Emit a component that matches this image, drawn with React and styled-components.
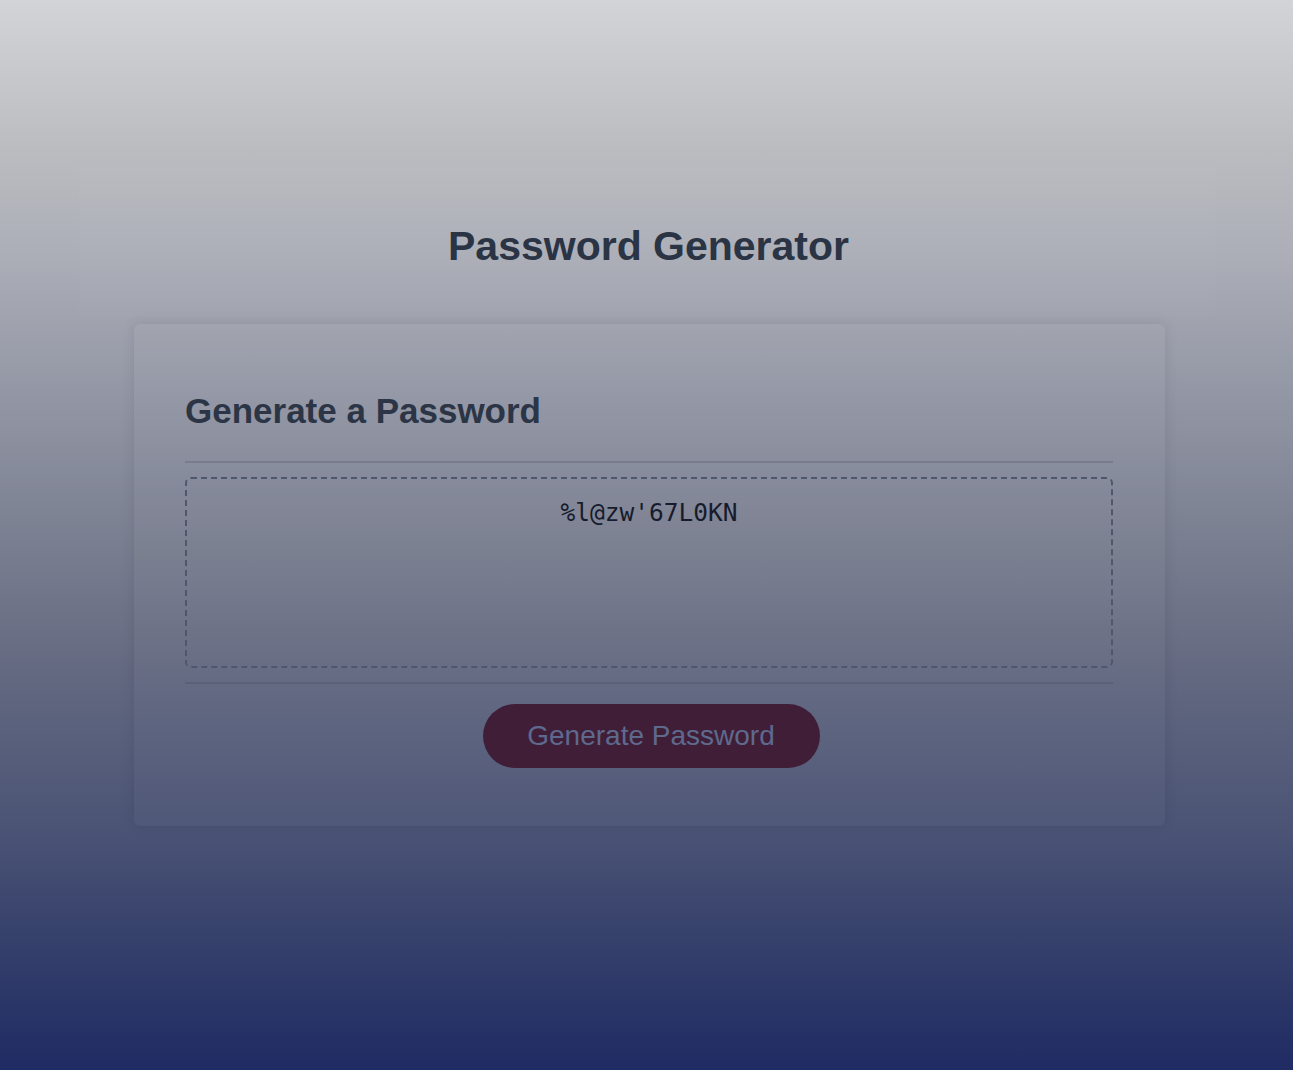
import React from "react";
import styled, { createGlobalStyle } from "styled-components";

const GlobalStyle = createGlobalStyle`
  html, body {
    margin: 0;
    padding: 0;
  }
  body {
    min-height: 1070px;
    font-family: "Liberation Sans", Arial, sans-serif;
    background: linear-gradient(
      to bottom,
      #d3d4d8 0%,
      #bbbcc0 14%,
      #abaeb7 24%,
      #8d91a0 40%,
      #777c8e 52%,
      #61677f 64%,
      #4a5375 78%,
      #35406b 88%,
      #1f2b63 100%
    );
  }
`;

const Page = styled.div`
  display: flex;
  flex-direction: column;
  align-items: center;
  padding-top: 167px;
  min-height: 1070px;
  box-sizing: border-box;
`;

const Header = styled.header`
  width: 1136px;
  height: 150px;
  box-sizing: border-box;
  padding-top: 55px;
  background: rgba(255, 255, 255, 0.015);
  text-align: center;
`;

const Title = styled.h1`
  margin: 0;
  font-size: 41px;
  line-height: 48px;
  font-weight: 700;
  color: #2a3444;
  padding-left: 4px;
`;

const Card = styled.section`
  width: 1031px;
  margin: 7px 0 0 6px;
  box-sizing: border-box;
  padding: 67px 52px 58px 51px;
  border-radius: 6px;
  background: rgba(255, 255, 255, 0.025);
  box-shadow: 0 0 14px rgba(20, 24, 40, 0.1);
  display: flex;
  flex-direction: column;
`;

const CardTitle = styled.h2`
  margin: 0 0 30px;
  font-size: 35px;
  line-height: 40px;
  font-weight: 700;
  color: #2b3546;
`;

const Rule = styled.div`
  height: 2px;
  background: rgba(60, 66, 90, 0.22);
`;

const Output = styled.div`
  margin: 14px 0;
  height: 191px;
  box-sizing: border-box;
  border: 2px dashed #50566d;
  border-radius: 6px;
  padding-top: 19px;
  text-align: center;
  font-family: "DejaVu Sans Mono", "Liberation Mono", monospace;
  font-size: 24.5px;
  line-height: 30px;
  color: #161c2c;
`;

const Footer = styled.div`
  display: flex;
  justify-content: center;
  padding-top: 20px;
`;

const Button = styled.button`
  width: 337px;
  height: 64px;
  margin-left: 4px;
  border: none;
  border-radius: 32px;
  background: #411e38;
  color: #5d6a8e;
  font-family: "Liberation Sans", Arial, sans-serif;
  font-size: 28px;
  cursor: pointer;
`;

export default function App() {
  return (
    <>
      <GlobalStyle />
      <Page>
        <Header>
          <Title>Password Generator</Title>
        </Header>
        <Card>
          <CardTitle>Generate a Password</CardTitle>
          <Rule />
          <Output>%l@zw'67L0KN</Output>
          <Rule />
          <Footer>
            <Button>Generate Password</Button>
          </Footer>
        </Card>
      </Page>
    </>
  );
}
